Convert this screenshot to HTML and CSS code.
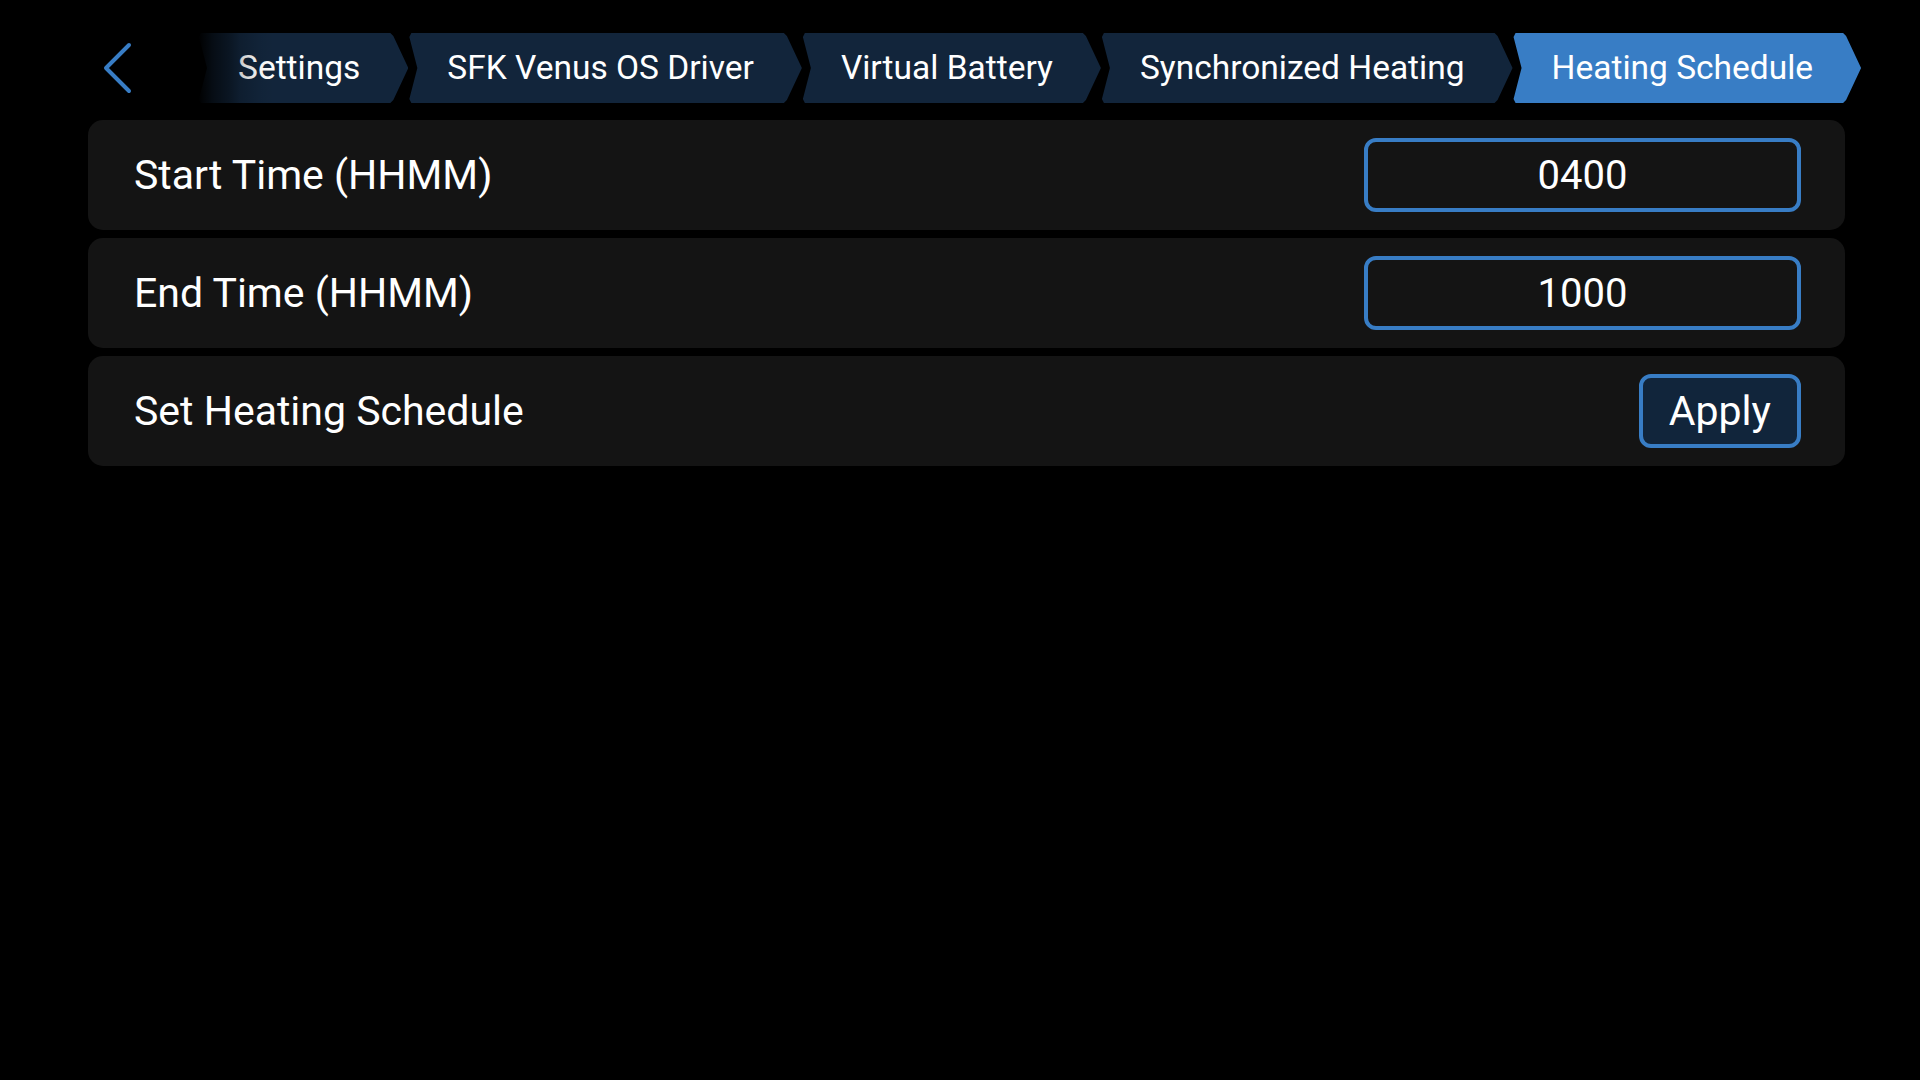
FILE: index.html
```html
<!DOCTYPE html>
<html lang="en">
<head>
  <meta charset="UTF-8">
  <meta name="viewport" content="width=device-width, initial-scale=1.0">
  <title>Heating Schedule</title>
  <link rel="stylesheet" href="styles.css">
</head>
<body>
  <div class="page">
    <div class="header">
      <button class="back-button" aria-label="Back">
        <svg width="32" height="56" viewBox="0 0 32 56">
          <path d="M29 5 L6 28 L29 51" fill="none" stroke="#387dc5" stroke-width="4" stroke-linecap="round" stroke-linejoin="round"/>
        </svg>
      </button>
      <div class="breadcrumbs">
        <div class="crumb">Settings</div>
        <div class="crumb">SFK Venus OS Driver</div>
        <div class="crumb">Virtual Battery</div>
        <div class="crumb">Synchronized Heating</div>
        <div class="crumb active">Heating Schedule</div>
      </div>
    </div>

    <!-- Schedule settings -->
    <div class="list">
      <div class="list-item">
        <span class="label">Start Time (HHMM)</span>
        <input class="field" type="text" value="0400" readonly>
      </div>
      <div class="list-item">
        <span class="label">End Time (HHMM)</span>
        <input class="field" type="text" value="1000" readonly>
      </div>
      <div class="list-item">
        <span class="label">Set Heating Schedule</span>
        <button class="apply-button">Apply</button>
      </div>
    </div>
  </div>
</body>
</html>
```

FILE: styles.css
```css
body {
  font-family: Roboto, 'Liberation Sans', Arial, sans-serif;
  background-color: #000;
  color: #fff;
  margin: 0;
  padding: 0;
}
.page {
  padding: 33px 75px 0 88px;
}
.header {
  display: flex;
  align-items: center;
  height: 70px;
  margin-bottom: 17px;
}
.back-button {
  width: 110px;
  height: 70px;
  padding: 0 0 0 12px;
  background: none;
  border: none;
  display: flex;
  align-items: center;
  cursor: pointer;
  flex-shrink: 0;
}
.back-button svg {
  display: block;
}
.breadcrumbs {
  display: flex;
  position: relative;
}
.breadcrumbs::after {
  content: "";
  position: absolute;
  left: 0;
  top: 0;
  bottom: 0;
  width: 76px;
  background: linear-gradient(to right, #000 0, rgba(0, 0, 0, 0.65) 15px, rgba(0, 0, 0, 0.4) 32px, rgba(0, 0, 0, 0.2) 42px, rgba(0, 0, 0, 0.05) 62px, transparent 76px);
  pointer-events: none;
}
.crumb {
  height: 70px;
  line-height: 70px;
  padding: 0 48px 0 39px;
  font-size: 33.5px;
  color: #fff;
  white-space: nowrap;
  background-color: #12253b;
  clip-path: polygon(3px 0, calc(100% - 18px) 0, calc(100% - 15px) 3px, 100% 50%, calc(100% - 15px) calc(100% - 3px), calc(100% - 18px) 100%, 3px 100%, 1px calc(100% - 4px), 9px 50%, 1px 4px);
}
.crumb:first-child {
  padding-left: 40px;
}
.crumb.active {
  background-color: #387dc5;
}
.list {
  display: flex;
  flex-direction: column;
  gap: 8px;
}
.list-item {
  display: flex;
  align-items: center;
  justify-content: space-between;
  height: 110px;
  padding: 0 44px 0 46px;
  background-color: #141414;
  border-radius: 15px;
}
.label {
  font-size: 41px;
}
.field {
  width: 437px;
  height: 74px;
  box-sizing: border-box;
  border: 4px solid #387dc5;
  border-radius: 12px;
  background: transparent;
  color: #fff;
  font-family: inherit;
  font-size: 40px;
  text-align: center;
  outline: none;
  padding: 0;
}
.apply-button {
  height: 74px;
  box-sizing: border-box;
  padding: 0 26px;
  border: 4px solid #387dc5;
  border-radius: 12px;
  background-color: #11253b;
  color: #fff;
  font-family: inherit;
  font-size: 41px;
  cursor: pointer;
}
```
